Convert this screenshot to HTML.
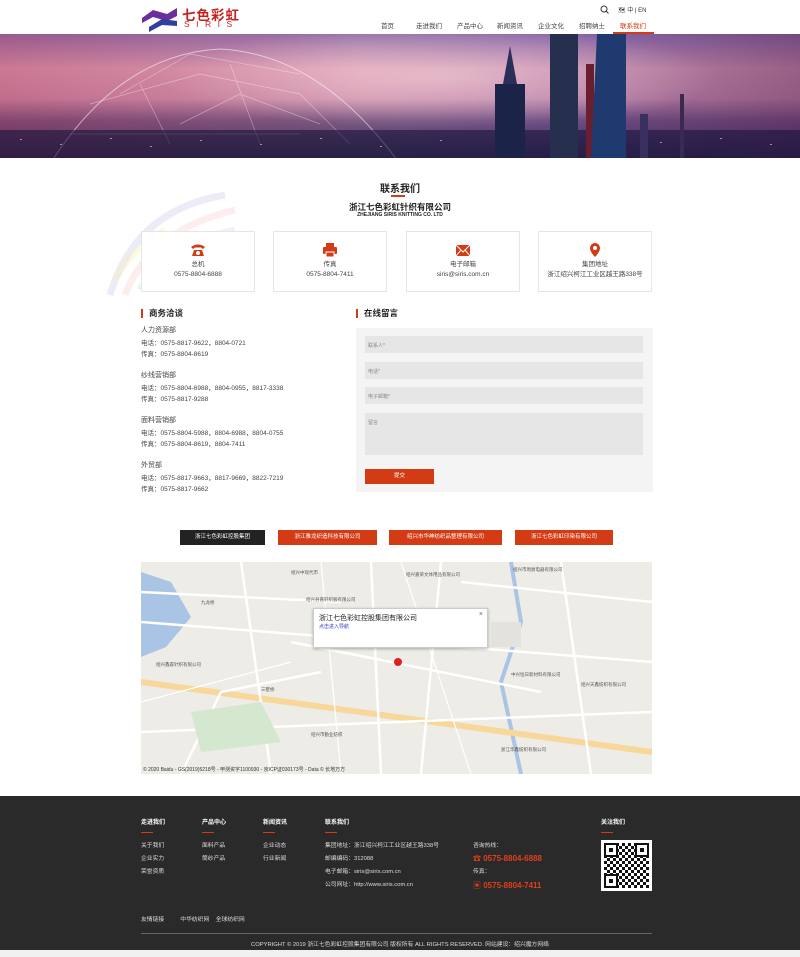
<!DOCTYPE html>
<html><head><meta charset="utf-8"><style>
*{margin:0;padding:0;box-sizing:border-box}
body{width:800px;height:957px;background:#fff;font-family:"Liberation Sans","Noto Sans CJK SC",sans-serif;font-size:7px;color:#333;position:relative;overflow:hidden}
.a{position:absolute}
.nav span{position:absolute;top:20px;font-size:6.5px;color:#444}
.card{position:absolute;top:231px;width:114px;height:61px;border:1px solid #e6e6e6;background:#fff;text-align:center;font-size:6.5px;line-height:10px;color:#444}
.card .ic{height:18px;margin-top:10px}
.sec{position:absolute;font-size:8.5px;font-weight:bold;color:#222;border-left:2px solid #d23b14;padding-left:6px;line-height:9px}
.dept{font-size:6.5px;color:#444;line-height:11px}
.inp{position:absolute;left:365px;width:278px;background:#e6e6e6;font-size:5px;color:#888;padding:6px 3px}
.btn{position:absolute;top:530px;height:15px;font-size:5.5px;color:#fff;text-align:center;line-height:15px;background:#d23b14}
.f{position:absolute;color:#ddd;font-size:5.8px;line-height:13px}
.fh{position:absolute;top:817px;color:#fff;font-size:6px;font-weight:bold}
.fl{position:absolute;top:832px;width:12px;height:1px;background:#d23b14}
.ml{position:absolute;font-size:4.5px;color:#555}
</style></head><body>
<!-- header -->
<svg class="a" style="left:141px;top:4px" width="38" height="28"><path d="M1 14 L12 6 L26 10 L36 4 L36 12 L26 17 L12 13 L1 19Z" fill="#6a2f9a"/><path d="M8 23 L21 15 L36 17 L36 22 L21 21 L8 28Z" fill="#3140a0"/></svg>
<div class="a" style="left:182px;top:4px;font-size:13.5px;font-weight:bold;color:#c8201c;letter-spacing:1px">七色彩虹</div>
<div class="a" style="left:184px;top:19px;font-size:8.5px;color:#c8201c;letter-spacing:6.5px">SIRIS</div>
<svg class="a" style="left:600px;top:5px" width="9" height="9"><circle cx="4" cy="4" r="3" fill="none" stroke="#333" stroke-width="1"/><path d="M6 6 L8.5 8.5" stroke="#333"/></svg>
<div class="a" style="left:618px;top:5px;font-size:6px;color:#333">🗺 中 | EN</div>
<div class="nav">
<span style="left:381px">首页</span><span style="left:416px">走进我们</span><span style="left:457px">产品中心</span><span style="left:497px">新闻资讯</span><span style="left:538px">企业文化</span><span style="left:579px">招聘纳士</span><span style="left:620px;color:#d23b14">联系我们</span>
</div>
<div class="a" style="left:613px;top:32px;width:41px;height:2px;background:#d23b14"></div>
<!-- banner -->
<div class="a" style="left:0;top:34px;width:800px;height:124px;background:linear-gradient(180deg,#8a6aa8 0%,#d898b0 28%,#c888a8 52%,#6a4a7a 70%,#2a2448 100%)"></div>
<div class="a" style="left:0;top:34px;width:800px;height:124px;background:radial-gradient(ellipse at 55% 35%,rgba(255,230,230,.45),rgba(255,220,220,0) 45%),linear-gradient(90deg,rgba(180,60,90,.35),rgba(255,200,200,.1) 45%,rgba(120,90,170,.2) 70%,rgba(90,40,90,.5))"></div>
<svg class="a" style="left:0;top:34px" width="800" height="124">
<path d="M50 130 Q120 20 220 15 Q320 20 400 130" fill="none" stroke="rgba(255,255,255,.55)" stroke-width="1"/>
<path d="M90 70 L200 40 L300 60 L350 110 M140 50 L170 110 M230 30 L260 110 M70 100 L300 100 M120 60 L190 20 L300 40 M180 90 L240 60 L320 90" fill="none" stroke="rgba(255,255,255,.4)" stroke-width=".7"/>
<rect x="0" y="96" width="800" height="28" fill="rgba(25,20,60,.6)"/>
<g fill="rgba(255,220,160,.6)"><rect x="20" y="105" width="2" height="1"/><rect x="60" y="110" width="2" height="1"/><rect x="110" y="104" width="2" height="1"/><rect x="150" y="112" width="2" height="1"/><rect x="200" y="106" width="2" height="1"/><rect x="260" y="110" width="2" height="1"/><rect x="320" y="104" width="2" height="1"/><rect x="380" y="112" width="2" height="1"/><rect x="440" y="106" width="2" height="1"/><rect x="660" y="108" width="2" height="1"/><rect x="720" y="104" width="2" height="1"/><rect x="770" y="110" width="2" height="1"/></g>
<rect x="495" y="50" width="30" height="74" fill="#1c2348"/><path d="M503 50 L510 12 L517 50Z" fill="#2a2f58"/>
<rect x="550" y="0" width="28" height="124" fill="#26304e"/>
<rect x="586" y="30" width="8" height="94" fill="#6a1f30"/>
<path d="M597 0 L626 0 L626 124 L591 124Z" fill="#1f3a6e"/>
<rect x="640" y="80" width="8" height="44" fill="#3a3060"/><rect x="680" y="60" width="4" height="64" fill="#3a2a50"/>
</svg>
<!-- decorative arcs -->
<svg class="a" style="left:105px;top:180px" width="140" height="120"><path d="M5 115 Q30 30 120 15" fill="none" stroke="rgba(200,200,235,.35)" stroke-width="7"/><path d="M20 115 Q45 50 130 30" fill="none" stroke="rgba(245,200,200,.3)" stroke-width="7"/><path d="M35 110 Q60 65 130 50" fill="none" stroke="rgba(200,215,240,.35)" stroke-width="7"/><path d="M10 100 Q25 70 60 50" fill="none" stroke="rgba(245,240,180,.4)" stroke-width="7"/></svg>
<!-- title -->
<div class="a" style="left:0;width:800px;top:180px;text-align:center;font-size:10px;font-weight:bold;color:#222">联系我们</div>
<div class="a" style="left:391px;top:195px;width:14px;height:2px;background:#d23b14"></div>
<div class="a" style="left:0;width:800px;top:201px;text-align:center;font-size:8.5px;font-weight:bold;color:#222">浙江七色彩虹针织有限公司</div>
<div class="a" style="left:0;width:800px;top:212px;text-align:center;font-size:5px;font-weight:bold;color:#222">ZHEJIANG SIRIS KNITTING CO. LTD</div>
<!-- cards -->
<div class="card" style="left:141px"><div class="ic"><svg width="16" height="16" viewBox="0 0 16 16"><path d="M1 5 Q8 0 15 5 L13 7 L11 5.5 L5 5.5 L3 7Z M4 8 L12 8 L14 14 L2 14Z" fill="#d23b14"/><circle cx="8" cy="11" r="2" fill="#fff"/></svg></div>总机<br>0575-8804-6888</div>
<div class="card" style="left:273px"><div class="ic"><svg width="16" height="16" viewBox="0 0 16 16"><rect x="4" y="1" width="8" height="4" fill="#d23b14"/><rect x="1" y="5" width="14" height="7" rx="1" fill="#d23b14"/><rect x="4" y="10" width="8" height="5" fill="#d23b14" stroke="#fff"/></svg></div>传真<br>0575-8804-7411</div>
<div class="card" style="left:406px"><div class="ic"><svg width="16" height="16" viewBox="0 0 16 16"><rect x="1" y="3" width="14" height="11" fill="#d23b14"/><path d="M1 3 L8 10 L15 3 M1 14 L6 8 M15 14 L10 8" stroke="#fff" fill="none"/></svg></div>电子邮箱<br>siris@siris.com.cn</div>
<div class="card" style="left:538px"><div class="ic"><svg width="16" height="16" viewBox="0 0 16 16"><path d="M8 1 A5 5 0 0 1 13 6 C13 10 8 15 8 15 C8 15 3 10 3 6 A5 5 0 0 1 8 1Z" fill="#d23b14"/><circle cx="8" cy="6" r="2" fill="#fff"/></svg></div>集团地址<br>浙江绍兴柯江工业区越王路338号</div>
<!-- left contacts -->
<div class="sec" style="left:141px;top:309px">商务洽谈</div>
<div class="a dept" style="left:141px;top:325px;width:200px">
<div style="font-size:7px;margin-bottom:2px">人力资源部</div>电话：0575-8817-9622，8804-0721<br>传真：0575-8804-8619
<div style="font-size:7px;margin:10px 0 2px">纱线营销部</div>电话：0575-8804-6988，8804-0955，8817-3338<br>传真：0575-8817-9288
<div style="font-size:7px;margin:10px 0 2px">面料营销部</div>电话：0575-8804-5988，8804-6988，8804-0755<br>传真：0575-8804-8619，8804-7411
<div style="font-size:7px;margin:10px 0 2px">外贸部</div>电话：0575-8817-9663，8817-9669，8822-7219<br>传真：0575-8817-9662
</div>
<!-- form -->
<div class="sec" style="left:356px;top:309px">在线留言</div>
<div class="a" style="left:356px;top:328px;width:297px;height:164px;background:#f4f4f4"></div>
<div class="inp" style="top:336px;height:17px">联系人*</div>
<div class="inp" style="top:362px;height:17px">电话*</div>
<div class="inp" style="top:387px;height:17px">电子邮箱*</div>
<div class="inp" style="top:413px;height:42px">留言</div>
<div class="a" style="left:365px;top:469px;width:69px;height:15px;background:#d23b14;color:#fff;font-size:5.5px;text-align:center;line-height:15px">提交</div>
<!-- buttons -->
<div class="btn" style="left:180px;width:85px;background:#222">浙江七色彩虹控股集团</div>
<div class="btn" style="left:278px;width:99px">浙江雅龙织造科技有限公司</div>
<div class="btn" style="left:389px;width:113px">绍兴市华绅纺织品整理有限公司</div>
<div class="btn" style="left:515px;width:98px">浙江七色彩虹印染有限公司</div>
<!-- map -->
<div class="a" style="left:141px;top:562px;width:511px;height:212px;background:#eeece6;overflow:hidden">
<svg width="511" height="212"><path d="M0 10 L30 20 L50 55 L25 85 L0 95Z" fill="#a9c4e4"/><path d="M370 0 L380 60 L360 120 L380 212" stroke="#a9c4e4" stroke-width="4" fill="none"/><path d="M0 120 L511 190" stroke="#f7d79a" stroke-width="6"/><path d="M0 60 L511 100 M100 0 L130 212 M230 0 L240 212 M300 0 L280 212 M420 0 L450 212 M0 170 L511 150 M0 30 L200 40 M150 80 L400 130 M320 20 L511 40 M40 212 L80 130 L180 110" stroke="#fff" stroke-width="2.5" fill="none"/><path d="M180 0 L200 212 M260 0 L330 212 M0 140 L150 100" stroke="#fff" stroke-width="1.2" fill="none"/><path d="M50 150 L120 140 L140 180 L60 190Z" fill="#d4e8cf"/><rect x="350" y="60" width="30" height="25" fill="#e4e2dc"/><circle cx="257" cy="100" r="4" fill="#e02020"/></svg>
<div class="ml" style="left:150px;top:8px">绍兴中现代市</div><div class="ml" style="left:265px;top:10px">绍兴嘉荣文体用品有限公司</div><div class="ml" style="left:372px;top:5px">绍兴市周厨电器有限公司</div><div class="ml" style="left:60px;top:38px">九龙桥</div><div class="ml" style="left:165px;top:35px">绍兴县嘉轩织服有限公司</div><div class="ml" style="left:15px;top:100px">绍兴鑫森针织有限公司</div><div class="ml" style="left:120px;top:125px">三墅桥</div><div class="ml" style="left:370px;top:110px">中兴恒日新材料有限公司</div><div class="ml" style="left:440px;top:120px">绍兴天鑫纺织有限公司</div><div class="ml" style="left:170px;top:170px">绍兴市勤业纺织</div><div class="ml" style="left:360px;top:185px">浙江华鑫纺织有限公司</div>
<div class="a" style="left:172px;top:46px;width:175px;height:40px;background:#fff;border:1px solid #ccc;box-shadow:0 1px 3px rgba(0,0,0,.3);padding:4px 5px;font-size:7px;color:#222">浙江七色彩虹控股集团有限公司<div style="font-size:5px;color:#33c">点击进入导航</div><span class="a" style="right:4px;top:2px;font-size:7px;color:#666">×</span></div>
<div class="a" style="left:2px;top:204px;font-size:5px;color:#333">© 2020 Baidu - GS(2019)5218号 - 甲测资字1100930 - 京ICP证030173号 - Data © 长地万方</div>
</div>
<!-- footer -->
<div class="a" style="left:0;top:796px;width:800px;height:154px;background:#2a2a2a"></div>
<div class="a" style="left:0;top:950px;width:800px;height:7px;background:#f0f0f0"></div>
<div class="fh" style="left:141px">走进我们</div><div class="fl" style="left:141px"></div>
<div class="fh" style="left:202px">产品中心</div><div class="fl" style="left:202px"></div>
<div class="fh" style="left:263px">新闻资讯</div><div class="fl" style="left:263px"></div>
<div class="fh" style="left:325px">联系我们</div><div class="fl" style="left:325px"></div>
<div class="fh" style="left:601px">关注我们</div><div class="fl" style="left:601px"></div>
<div class="f" style="left:141px;top:840px">关于我们<br>企业实力<br>荣誉资质</div>
<div class="f" style="left:202px;top:840px">面料产品<br>筒纱产品</div>
<div class="f" style="left:263px;top:840px">企业动态<br>行业新闻</div>
<div class="f" style="left:325px;top:840px">集团地址：浙江绍兴柯江工业区越王路338号<br>邮编编码：312088<br>电子邮箱：siris@siris.com.cn<br>公司网址：http://www.siris.com.cn</div>
<div class="f" style="left:473px;top:840px">咨询热线：</div>
<div class="a" style="left:473px;top:853px;color:#e0401a;font-size:8px;font-weight:bold">☎ 0575-8804-6888</div>
<div class="f" style="left:473px;top:866px">传真：</div>
<div class="a" style="left:473px;top:880px;color:#e0401a;font-size:8px;font-weight:bold">▣ 0575-8804-7411</div>
<div class="a" style="left:601px;top:840px;width:51px;height:51px;background:#fff;padding:3px">
<svg width="45" height="45"><pattern id="p" width="6" height="6" patternUnits="userSpaceOnUse"><rect width="3" height="3" fill="#111"/><rect x="3" y="3" width="3" height="3" fill="#111"/></pattern><rect width="45" height="45" fill="url(#p)"/><g fill="#fff" stroke="#111" stroke-width="2"><rect x="1" y="1" width="12" height="12"/><rect x="32" y="1" width="12" height="12"/><rect x="1" y="32" width="12" height="12"/></g><g fill="#111"><rect x="5" y="5" width="4" height="4"/><rect x="36" y="5" width="4" height="4"/><rect x="5" y="36" width="4" height="4"/></g></svg></div>
<div class="f" style="left:141px;top:914px">友情链接&nbsp;&nbsp;&nbsp;&nbsp;&nbsp;&nbsp;&nbsp;&nbsp;&nbsp;&nbsp;中华纺织网&nbsp;&nbsp;&nbsp;&nbsp;全球纺织网</div>
<div class="a" style="left:141px;top:933px;width:511px;height:1px;background:#666"></div>
<div class="f" style="left:0;width:800px;top:939px;text-align:center">COPYRIGHT © 2019 浙江七色彩虹控股集团有限公司 版权所有 ALL RIGHTS RESERVED. 网站建设：绍兴魔方网络</div>
</body></html>
